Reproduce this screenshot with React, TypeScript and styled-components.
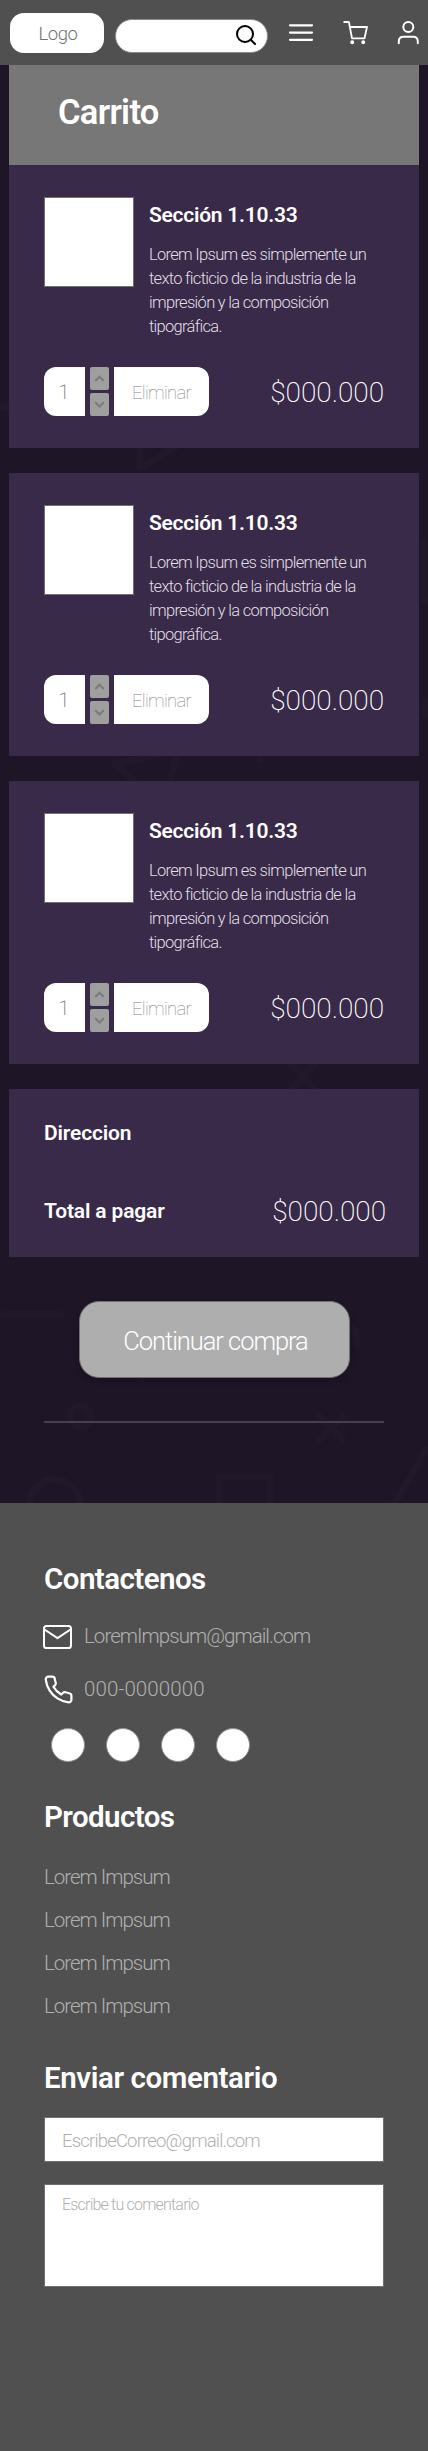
import React from "react";
import styled, { createGlobalStyle } from "styled-components";

const GlobalStyle = createGlobalStyle`
  * { box-sizing: border-box; }
  body {
    margin: 0;
    background: #1e1526;
    font-family: Roboto, "Open Sans", sans-serif;
    color: #fff;
  }
  h1, h2, h3, p, ul { margin: 0; padding: 0; font-weight: inherit; }
  button, input, textarea { font: inherit; appearance: none; }
`;

const Page = styled.div`
  position: relative;
  isolation: isolate;
  width: 428px;
  height: 2451px;
  display: flex;
  flex-direction: column;
  overflow: hidden;
`;

const Pattern = styled.svg`
  position: absolute;
  inset: 0;
  z-index: -1;
`;

const Header = styled.header`
  height: 65px;
  flex: none;
  display: flex;
  align-items: flex-start;
  padding: 13px 0 0 10px;
  background: #505050;
`;

const Logo = styled.div`
  width: 94px;
  height: 40px;
  padding-left: 2px;
  border-radius: 14px;
  background: #fff;
  color: #707070;
  font-size: 18.5px;
  font-weight: 300;
  line-height: 42px;
  letter-spacing: -0.5px;
  text-align: center;
`;

const Search = styled.div`
  width: 153px;
  height: 34px;
  margin: 5.5px 0 0 10.5px;
  padding: 3.5px 8.5px 0 0;
  display: flex;
  justify-content: flex-end;
  border: 1px solid #8a8a8a;
  border-radius: 17px;
  background: #fff;
`;

const Actions = styled.nav`
  display: flex;
  align-items: flex-start;
  margin: 7px 0 0 20.5px;
`;

const ActionIcon = styled.svg<{ $after?: number }>`
  display: block;
  flex: none;
  margin-right: ${(p) => p.$after ?? 0}px;
  overflow: visible;
  fill: none;
  stroke: #fff;
  stroke-linecap: round;
  stroke-linejoin: round;
`;

const Main = styled.main`
  width: 410px;
  margin: 0 9px;
  flex: none;
`;

const Banner = styled.div`
  height: 100px;
  padding: 27px 0 0 49px;
  background: #777;
`;

const BannerTitle = styled.h1`
  font-size: 34.5px;
  font-weight: 600;
  line-height: 40px;
  letter-spacing: -0.7px;
`;

const Panel = styled.section<{ $height: number }>`
  height: ${(p) => p.$height}px;
  margin-bottom: 25px;
  padding: 32px 35px 0;
  background: #382a48;
`;

const ProductTop = styled.div`
  display: flex;
  gap: 15px;
  height: 170px;
`;

const Thumb = styled.div`
  width: 90px;
  height: 90px;
  flex: none;
  border: 1px solid #707070;
  background: #fff;
`;

const Info = styled.div`
  padding-top: 3px;
`;

const ProductName = styled.h2`
  font-size: 21px;
  font-weight: 600;
  line-height: 30px;
  letter-spacing: -0.25px;
`;

const Description = styled.p`
  width: 228px;
  margin-top: 13px;
  color: #e2dfe6;
  font-size: 16.5px;
  font-weight: 300;
  line-height: 24px;
  letter-spacing: -0.7px;
`;

const ProductActions = styled.div`
  display: flex;
  align-items: stretch;
  height: 49px;
`;

const Quantity = styled.div`
  width: 41px;
  margin-right: 5px;
  padding-right: 1px;
  border-radius: 12px 0 0 12px;
  background: #fff;
  color: #707070;
  font-size: 20px;
  font-weight: 200;
  line-height: 50px;
  text-align: center;
`;

const Stepper = styled.div`
  width: 19px;
  margin-right: 5px;
  display: grid;
  grid-template-rows: 1fr 1fr;
  gap: 3px;
`;

const Step = styled.button`
  display: grid;
  place-items: center;
  padding: 0;
  border: 0;
  border-radius: 2px;
  background: #9f9f9f;
`;

const RemoveButton = styled.button`
  width: 95px;
  padding: 3px 0 0 0;
  border: 0;
  border-radius: 0 12px 12px 0;
  background: #fff;
  color: #808080;
  font-size: 18.5px;
  font-weight: 100;
  letter-spacing: -0.7px;
  text-align: center;
`;

const Price = styled.span`
  margin-left: auto;
  padding-top: 1px;
  font-size: 28px;
  font-weight: 200;
  line-height: 49px;
  letter-spacing: -0.05px;
`;

const SummaryLabel = styled.h2`
  font-size: 21px;
  font-weight: 600;
  line-height: 24px;
  letter-spacing: -0.15px;
`;

const TotalRow = styled.div`
  display: flex;
  align-items: center;
  height: 50px;
  margin: 41px -2px 0 0;

  ${Price} { padding-top: 0; }
`;

const Checkout = styled.div`
  flex: none;
  height: 221px;
  padding: 19px 44px 0;
  display: flex;
  flex-direction: column;
  align-items: center;
`;

const ContinueButton = styled.button`
  width: 271px;
  height: 77px;
  padding: 2px 0 0 3px;
  border: 1px solid #707070;
  border-radius: 20px;
  background: #aeaeae;
  box-shadow: 0 3px 6px rgba(0, 0, 0, 0.16);
  color: #fff;
  font-size: 25.5px;
  font-weight: 350;
  letter-spacing: -1.05px;
`;

const Divider = styled.div`
  width: 340px;
  height: 2px;
  margin-top: 43px;
  background: #47404d;
`;

const Footer = styled.footer`
  flex: 1;
  padding: 56px 44px 0;
  background: #505050;
`;

const FooterTitle = styled.h2<{ $top?: number; $spacing?: number }>`
  margin-top: ${(p) => p.$top ?? 0}px;
  font-size: 29.5px;
  font-weight: 600;
  line-height: 40px;
  letter-spacing: ${(p) => p.$spacing ?? -0.55}px;
`;

const Contacts = styled.div`
  display: flex;
  flex-direction: column;
  gap: 22px;
  padding-top: 22px;
`;

const Contact = styled.div<{ $spacing: number }>`
  display: flex;
  align-items: center;
  gap: 10px;
  height: 31px;
  margin-left: -1px;
  color: #b0b0b0;
  font-size: 20.5px;
  font-weight: 300;
  line-height: 31px;
  letter-spacing: ${(p) => p.$spacing}px;
`;

const Socials = styled.div`
  display: flex;
  gap: 21px;
  margin: 23px 0 0 6.5px;
`;

const Social = styled.div`
  width: 34px;
  height: 34px;
  border: 1px solid #909090;
  border-radius: 50%;
  background: #fff;
`;

const Links = styled.ul`
  margin-top: 19px;
  list-style: none;
`;

const LinkItem = styled.li`
  height: 43px;
  color: #b0b0b0;
  font-size: 20.5px;
  font-weight: 300;
  line-height: 43px;
  letter-spacing: -1px;
`;

const Form = styled.form`
  display: flex;
  flex-direction: column;
  gap: 22px;
  margin-top: 19px;
`;

const EmailField = styled.input`
  width: 340px;
  height: 45px;
  padding: 3px 17px 0;
  border: 1px solid #707070;
  border-radius: 0;
  background: #fff;
  font-size: 18.5px;
  font-weight: 300;
  letter-spacing: -0.82px;
  &::placeholder { color: #b0b0b0; opacity: 1; }
`;

const CommentField = styled.textarea`
  width: 340px;
  height: 103px;
  padding: 10px 17px 0;
  border: 1px solid #707070;
  border-radius: 0;
  background: #fff;
  font-size: 16px;
  font-weight: 300;
  line-height: 20px;
  letter-spacing: -0.8px;
  resize: none;
  &::placeholder { color: #b0b0b0; opacity: 1; }
`;

function BackgroundPattern() {
  return (
    <Pattern width="428" height="1503" viewBox="0 0 428 1503" fill="none" stroke="#211829" strokeWidth="7" strokeLinecap="round" strokeLinejoin="round">
      <path d="M0 407H30M140 430V468L195 436" />
      <path d="M178 750L168 790M178 750L114 764L145 790M260 740V760M424 541V600H440M425 700V715" />
      <path d="M290 1063L316 1091M316 1063L290 1091" />
      <path d="M2 1314.5H61M141 1340V1378M337 1318Q357 1324 357 1344" />
      <circle cx="80.500" cy="1416.500" r="10.500" />
      <path d="M319 1416L343 1440M343 1416L319 1440" />
      <circle cx="55" cy="1505" r="25.500" />
      <rect x="219" y="1477" width="51" height="51" />
      <path d="M426 1450L388 1515" />
    </Pattern>
  );
}

function Chevron({ down }: { down?: boolean }) {
  return (
    <svg width="11" height="9" viewBox="0 0 11 9" fill="none" stroke="#7a7a7a" strokeWidth="2.1">
      <path d={down ? "M1.200 2.200L5.500 6.500L9.800 2.200" : "M1.200 7L5.500 2.700L9.800 7"} />
    </svg>
  );
}

function Product() {
  return (
    <Panel $height={283}>
      <ProductTop>
        <Thumb />
        <Info>
          <ProductName>Sección 1.10.33</ProductName>
          <Description>
            Lorem Ipsum es simplemente un
            <br />
            texto ficticio de la industria de la
            <br />
            impresión y la composición
            <br />
            tipográfica.
          </Description>
        </Info>
      </ProductTop>
      <ProductActions>
        <Quantity>1</Quantity>
        <Stepper>
          <Step aria-label="Aumentar"><Chevron /></Step>
          <Step aria-label="Disminuir"><Chevron down /></Step>
        </Stepper>
        <RemoveButton>Eliminar</RemoveButton>
        <Price>$000.000</Price>
      </ProductActions>
    </Panel>
  );
}

export default function App() {
  return (
    <>
      <GlobalStyle />
      <Page>
        <BackgroundPattern />
        <Header>
          <Logo>Logo</Logo>
          <Search>
            <svg width="24" height="24" viewBox="0 0 24 24" fill="none" stroke="#000" strokeWidth="2" strokeLinecap="round">
              <circle cx="11" cy="11" r="8" />
              <path d="M21 21L16.700 16.700" />
            </svg>
          </Search>
          <Actions>
            <ActionIcon width="26" height="26" viewBox="0 0 26 26" strokeWidth="2.2" $after={29}>
              <path d="M2 5.300H24M2 12.600H24M2 19.800H24" />
            </ActionIcon>
            <ActionIcon width="26" height="26" viewBox="0 0 26 26" strokeWidth="1.8" $after={29}>
              <path d="M1.200 2H5.900L9 18.300H21.500L24 7H7" />
              <circle cx="9.200" cy="22.300" r="1.100" fill="#fff" />
              <circle cx="20.200" cy="22.300" r="1.100" fill="#fff" />
            </ActionIcon>
            <ActionIcon width="26" height="26" viewBox="0 0 26 26" strokeWidth="2">
              <circle cx="10.300" cy="7" r="5" />
              <path d="M.800 23.300V21.500Q.800 16.800 5.500 16.800H15.100Q19.800 16.800 19.800 21.500V23.300" />
            </ActionIcon>
          </Actions>
        </Header>
        <Main>
          <Banner>
            <BannerTitle>Carrito</BannerTitle>
          </Banner>
          <Product />
          <Product />
          <Product />
          <Panel $height={168}>
            <SummaryLabel>Direccion</SummaryLabel>
            <TotalRow>
              <SummaryLabel>Total a pagar</SummaryLabel>
              <Price>$000.000</Price>
            </TotalRow>
          </Panel>
        </Main>
        <Checkout>
          <ContinueButton>Continuar compra</ContinueButton>
          <Divider />
        </Checkout>
        <Footer>
          <FooterTitle>Contactenos</FooterTitle>
          <Contacts>
            <Contact $spacing={-0.95}>
              <svg width="31" height="24" viewBox="0 0 31 24" fill="none" stroke="#fff" strokeWidth="2" strokeLinejoin="round">
                <rect x="1" y="1" width="27" height="22" rx="2.600" />
                <path d="M1.500 4.500L14.500 13.200L27.500 4.500" />
              </svg>
              LoremImpsum@gmail.com
            </Contact>
            <Contact $spacing={0.1}>
              <svg width="31" height="31" viewBox="0 0 24 24" fill="none" stroke="#fff" strokeWidth="1.700" strokeLinecap="round" strokeLinejoin="round">
                <path d="M22 16.920v3a2 2 0 0 1-2.180 2 19.790 19.790 0 0 1-8.630-3.070 19.500 19.500 0 0 1-6-6 19.790 19.790 0 0 1-3.070-8.670A2 2 0 0 1 4.110 2h3a2 2 0 0 1 2 1.720 12.840 12.840 0 0 0 .700 2.810 2 2 0 0 1-.450 2.110L8.090 9.910a16 16 0 0 0 6 6l1.270-1.270a2 2 0 0 1 2.110-.450 12.840 12.840 0 0 0 2.810.700A2 2 0 0 1 22 16.920z" />
              </svg>
              000-0000000
            </Contact>
          </Contacts>
          <Socials>
            <Social />
            <Social />
            <Social />
            <Social />
          </Socials>
          <FooterTitle $top={35} $spacing={-0.6}>Productos</FooterTitle>
          <Links>
            <LinkItem>Lorem Impsum</LinkItem>
            <LinkItem>Lorem Impsum</LinkItem>
            <LinkItem>Lorem Impsum</LinkItem>
            <LinkItem>Lorem Impsum</LinkItem>
          </Links>
          <FooterTitle $top={30} $spacing={-0.4}>Enviar comentario</FooterTitle>
          <Form>
            <EmailField placeholder="EscribeCorreo@gmail.com" />
            <CommentField placeholder="Escribe tu comentario" />
          </Form>
        </Footer>
      </Page>
    </>
  );
}
